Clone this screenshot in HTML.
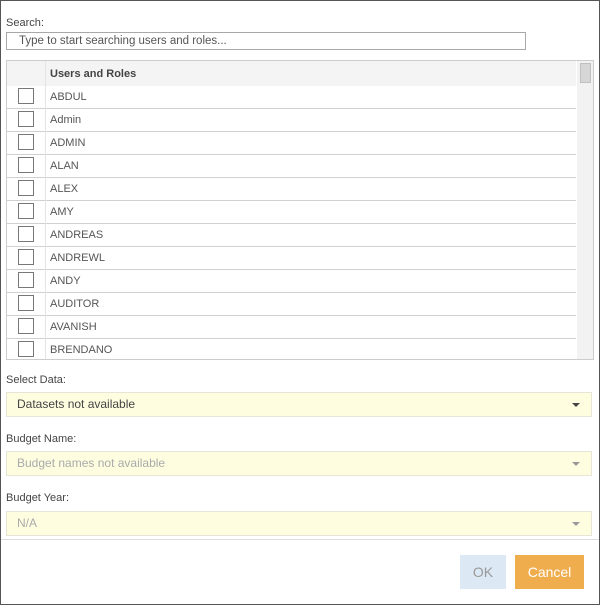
<!DOCTYPE html>
<html><head><style>
*{box-sizing:border-box;margin:0;padding:0}
body{width:600px;height:605px;background:#fff;font-family:"Liberation Sans",sans-serif;font-size:11px;color:#444;position:relative;overflow:hidden}
.frame{position:absolute;left:0;top:0;width:600px;height:605px;border:1px solid #555}
.a{position:absolute}
.lbl{position:absolute;left:6px;font-size:11px;color:#444}
.search{left:6px;top:32px;width:520px;height:18px;border:1px solid #a8a8a8;padding-left:12px;line-height:16px;color:#555;font-size:11.5px}
.tbl{left:6px;top:60px;width:588px;height:300px;border:1px solid #ccc;overflow:hidden}
.hdr{position:absolute;left:0;top:0;width:569px;height:25px;background:#f4f4f4}
.hdr span{position:absolute;left:43px;top:7px;font-weight:bold;color:#444}
.vl{position:absolute;left:38px;top:0;width:1px;height:300px;background:#e4e4e4}
.row{position:absolute;left:0;width:569px;height:23px;border-bottom:1px solid #d0d0d0}
.row .cb{position:absolute;left:11px;top:2px;width:16px;height:16px;border:1px solid #777;background:#fff}
.row span{position:absolute;left:43px;top:5px;color:#555}
.sb{position:absolute;left:570px;top:0;width:17px;height:298px;background:#f2f2f2}
.th{position:absolute;left:3px;top:2px;width:11px;height:20px;background:#d6d6d6;border:1px solid #c0c0c0}
.dd{position:absolute;left:6px;width:586px;height:25px;background:#fefde0;border:1px solid #e6e6d8;padding-left:10px;line-height:23px;font-size:12px}
.dd i{position:absolute;right:11px;top:10px;width:0;height:0;border-left:4px solid transparent;border-right:4px solid transparent;border-top:4px solid #444}
.dis{color:#aaa}.dis i{border-top-color:#999}
.sep{left:1px;top:539px;width:598px;height:1px;background:#ddd}
.btn{position:absolute;top:555px;height:34px;color:#fff;font-size:14px;text-align:center;line-height:34px}
</style></head><body>
<div class="frame"></div>
<div class="lbl" style="top:17px">Search:</div>
<div class="a search">Type to start searching users and roles...</div>
<div class="a tbl">
<div class="hdr"><span>Users and Roles</span></div>
<div class="row" style="top:25px"><div class="cb"></div><span>ABDUL</span></div>
<div class="row" style="top:48px"><div class="cb"></div><span>Admin</span></div>
<div class="row" style="top:71px"><div class="cb"></div><span>ADMIN</span></div>
<div class="row" style="top:94px"><div class="cb"></div><span>ALAN</span></div>
<div class="row" style="top:117px"><div class="cb"></div><span>ALEX</span></div>
<div class="row" style="top:140px"><div class="cb"></div><span>AMY</span></div>
<div class="row" style="top:163px"><div class="cb"></div><span>ANDREAS</span></div>
<div class="row" style="top:186px"><div class="cb"></div><span>ANDREWL</span></div>
<div class="row" style="top:209px"><div class="cb"></div><span>ANDY</span></div>
<div class="row" style="top:232px"><div class="cb"></div><span>AUDITOR</span></div>
<div class="row" style="top:255px"><div class="cb"></div><span>AVANISH</span></div>
<div class="row" style="top:278px;border-bottom:none"><div class="cb"></div><span>BRENDANO</span></div>
<div class="vl"></div>
<div class="sb"><div class="th"></div></div>
</div>
<div class="lbl" style="top:374px">Select Data:</div>
<div class="dd" style="top:392px">Datasets not available<i></i></div>
<div class="lbl" style="top:433px">Budget Name:</div>
<div class="dd dis" style="top:451px">Budget names not available<i></i></div>
<div class="lbl" style="top:492px">Budget Year:</div>
<div class="dd dis" style="top:511px">N/A<i></i></div>
<div class="a sep"></div>
<div class="btn" style="left:460px;width:46px;background:#dde8f5;color:#999">OK</div>
<div class="btn" style="left:515px;width:69px;background:#f0ad4e">Cancel</div>
</body></html>
